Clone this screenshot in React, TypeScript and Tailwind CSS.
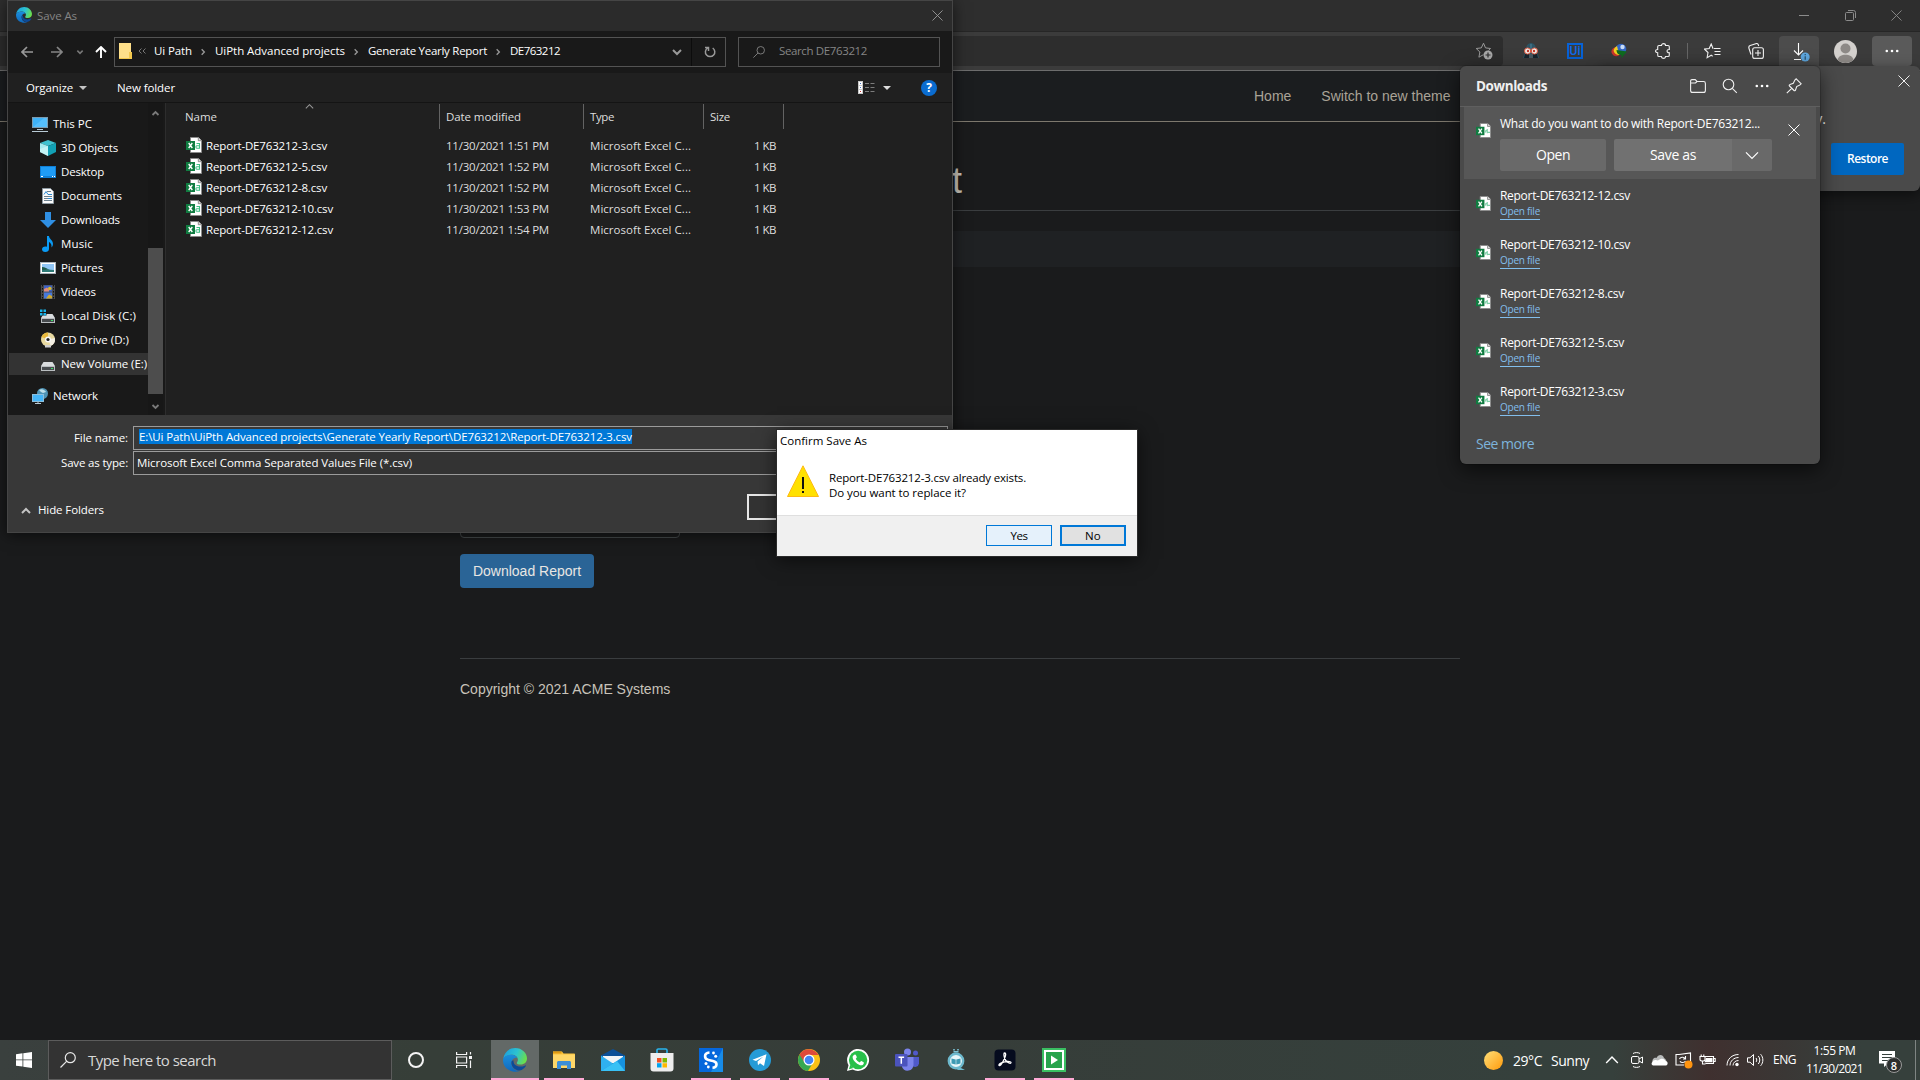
import React, { useLayoutEffect, useRef, useState } from 'react';

/* Single-line label that tightens its tracking to fill exactly `w` pixels. */
function T({ w, className = '', children }: { w: number; className?: string; children: string }) {
  const ref = useRef<HTMLSpanElement>(null);
  const [ls, setLs] = useState(0);
  useLayoutEffect(() => {
    if (!ref.current) return;
    const natural = ref.current.getBoundingClientRect().width - ls * children.length;
    setLs((w - natural) / children.length);
  }, [w, children]);
  return (
    <span className={`block shrink-0 whitespace-nowrap ${className}`} style={{ width: w }}>
      <span ref={ref} className="inline-block whitespace-pre" style={{ letterSpacing: `${ls}px` }}>
        {children}
      </span>
    </span>
  );
}

type P = { className?: string };

const Edge = ({ className = '', id }: P & { id: string }) => (
  <svg viewBox="0 0 24 24" className={`shrink-0 ${className}`}>
    <defs>
      <linearGradient id={`${id}a`} x1="0" y1="0.2" x2="1" y2="0.5">
        <stop offset="0" stopColor="#1c9fe0" />
        <stop offset="0.55" stopColor="#2cc3d0" />
        <stop offset="1" stopColor="#6ade4c" />
      </linearGradient>
      <linearGradient id={`${id}b`} x1="0" y1="0" x2="0" y2="1">
        <stop offset="0" stopColor="#1b8fdc" />
        <stop offset="1" stopColor="#1068bd" />
      </linearGradient>
    </defs>
    <path d="M0.3 10.5C1.2 4.2 6.2 0 12.2 0 19 0 24 5 24 10.6c0 3.7-2.8 6-6.2 6-2.7 0-4-.8-4-1.7 0-.8 1.1-1.2 1.1-3.2C14.900 8.900 12 6.800 8.600 6.800 4.900 6.800 1.500 8.600.3 10.500z" fill={`url(#${id}a)`} />
    <path d="M.2 10.500C1.700 8.200 4.800 6.800 8.300 6.800c3 0 5.200 1.400 6.100 3.200-2.700-.8-6 1.400-6 5.300 0 4.700 4.300 8 8.500 7.700C11 25.500 0 22 0 12z" fill={`url(#${id}b)`} />
    <path d="M8.500 13.500c-.8 5 3.500 9 8.200 9.100 2.800-.7 4.900-2.500 6.200-4.600.3-.5-.1-.8-.6-.6-6.600 2.900-12.400.2-11.800-5.100-.9.3-1.600.6-2 1.200z" fill="#0c4a98" />
  </svg>
);

const Excel = ({ className = '', letter = true }: P & { letter?: boolean }) => (
  <svg viewBox="0 0 16 16" className={`shrink-0 ${className}`}>
    <path d="M4.500.5h8L15.500 3.500v12H4.500z" fill="#fff" stroke="#8b8b8b" />
    <path d="M12.300.5v3.200h3.200" fill="#ddd" stroke="#777" strokeWidth=".8" />
    <rect x="0" y="4" width="9" height="9" fill="#107c41" />
    <path d="M2.700 6l3.600 5M6.300 6l-3.600 5" stroke="#fff" strokeWidth="1.400" />
    {letter ? (
      <path d="M10.500 6.500h3v4.700h-2.800c-1 0-1-2.500 0-2.500h2.800" fill="none" stroke="#3fbf85" strokeWidth="1.100" />
    ) : (
      <path d="M9.500 10.500c1-4 2-3 2.500-.5h3M12 6.500v4.500" fill="none" stroke="#7fd0a8" strokeWidth="1.200" />
    )}
  </svg>
);

const Chevron = ({ className = '', d = 'M2 4l4 4 4-4', sw = 1.5 }: P & { d?: string; sw?: number }) => (
  <svg viewBox="0 0 12 12" className={`shrink-0 ${className}`} fill="none" stroke="currentColor" strokeWidth={sw}>
    <path d={d} />
  </svg>
);
const RIGHT = 'M4 2l4 4-4 4';
const UP = 'M2 8l4-4 4 4';

const Cross = ({ className = '' }: P) => (
  <svg viewBox="0 0 12 12" className={`shrink-0 ${className}`} fill="none" stroke="currentColor" strokeWidth="1">
    <path d="M.5.5l11 11M11.500.5l-11 11" />
  </svg>
);

const Dots = ({ className = '' }: P) => (
  <svg viewBox="0 0 14 4" className={`h-1 w-3.5 shrink-0 ${className}`} fill="#fff">
    <circle cx="1.800" cy="2" r="1.300" />
    <circle cx="7" cy="2" r="1.300" />
    <circle cx="12.200" cy="2" r="1.300" />
  </svg>
);

const Magnifier = ({ className = '' }: P) => (
  <svg viewBox="0 0 16 16" className={`shrink-0 ${className}`} fill="none" stroke="currentColor" strokeWidth="1.200">
    <circle cx="10.300" cy="5.700" r="5" />
    <path d="M6.800 9.200L.5 15.500" />
  </svg>
);

/* ---------- Navigation pane icons ---------- */
const S = ({ children }: { children: React.ReactNode }) => (
  <svg viewBox="0 0 16 16" className="size-4 shrink-0">{children}</svg>
);
const PcIcon = () => (
  <S>
    <rect x=".5" y="1.500" width="15" height="10" fill="#3fb2f7" stroke="#7b9bb0" />
    <path d="M1 11L12 2h3v9z" fill="#64c6ff" opacity=".6" />
    <path d="M5 13.500h6M0 15.500h16" stroke="#b9cbd6" />
  </S>
);
const CubeIcon = () => (
  <S>
    <path d="M8 0l8 3-8 3-8-3z" fill="#3fc1cf" />
    <path d="M0 3l8 3v10l-8-4z" fill="#a5ecf0" />
    <path d="M16 3L8 6v10l8-4z" fill="#12a0b4" />
    <path d="M0 9l8-3v10l-8-4z" fill="#d2f7f7" opacity=".7" />
  </S>
);
const DesktopIcon = () => (
  <S>
    <rect x="0" y="2" width="16" height="12" fill="#0f7fd6" />
    <rect x="1" y="3" width="14" height="9" fill="#1f9cf6" />
    <path d="M1 12.500h2M12 12.500h1M14 12.500h1" stroke="#fff" />
  </S>
);
const DocIcon = () => (
  <S>
    <path d="M2.500.5h8l3 3v12h-11z" fill="#fafafa" stroke="#8e9aa3" />
    <path d="M7 3.500h4M4 8.500h8M4 10.500h8M4 12.500h8" stroke="#6b7f8d" />
    <path d="M4 6.500l2-3 2 3h4M8 10.500h4" stroke="#2a8ad4" fill="none" />
  </S>
);
const DownIcon = () => (
  <S>
    <path d="M5 0h6v8h5l-8 8-8-8h5z" fill="#2f8fe3" />
  </S>
);
const MusicIcon = () => (
  <S>
    <path d="M7 0h2c0 3 4 4 4 8 0 2-1 3-1.500 3.500C12 8 10 6.500 9 6v7c0 2-1.500 3-3.700 3S2 14.800 2 13.300C2 11.500 4 10 7 10.800z" fill="#0a9bf5" />
  </S>
);
const PicIcon = () => (
  <S>
    <rect x=".5" y="2.500" width="15" height="11" fill="#fff" stroke="#a9b3ba" />
    <rect x="2" y="4" width="12" height="8" fill="#8fc5f5" />
    <path d="M2 8l5 1.500 7 .5v2H2z" fill="#2e7a76" />
    <path d="M2 7c3 0 5 2 8 2.500L2 10z" fill="#1d5a4c" />
  </S>
);
const VideoIcon = () => (
  <S>
    <rect x="1" y="1" width="14" height="14" fill="#4b4b4b" />
    <rect x="4" y="1.500" width="8" height="6" fill="#3a62c9" />
    <rect x="4" y="8.500" width="8" height="6" fill="#4678dc" />
    <path d="M4 7.500V5l3-1.500 2 2v2z" fill="#e28b7b" />
    <circle cx="9.800" cy="4.500" r="1.800" fill="#d8b92c" />
    <path d="M6 14.500l3-4 3 1.500v2.500z" fill="#cfa92c" />
    <path d="M2.500 1v14M13.500 1v14" stroke="#111" strokeDasharray="1.500 1.500" />
  </S>
);
const DriveIcon = ({ win = false }: { win?: boolean }) => (
  <S>
    <path d="M3.500 6h9L15 10H1z" fill="#d9dcde" />
    <rect x="1" y="10" width="14" height="5" fill="#b9bdc0" />
    <rect x="2" y="11" width="12" height="3" fill="#474b4e" />
    <rect x="11" y="12" width="2" height="1" fill="#3ee06a" />
    {win && (
      <>
        <rect x="0" y="1" width="6.500" height="6.500" fill="#191919" />
        <path d="M0 1.500h2.500V4H0zM3.500 1.500H6V4H3.500zM0 5h2.500v2.500H0zM3.500 5H6v2.500H3.500z" fill="#18b4ea" />
      </>
    )}
  </S>
);
const CdIcon = () => (
  <S>
    <circle cx="8" cy="7.500" r="7" fill="#e8d9a0" />
    <path d="M8 7.500L1.500 5A7 7 0 0 1 8 .5z" fill="#e9b93c" />
    <path d="M8 7.500l6.800-1.500a7 7 0 0 1-4 7.800z" fill="#f4f0e4" />
    <circle cx="8" cy="7.500" r="3" fill="#f7f7f7" />
    <circle cx="8" cy="7.500" r="1.600" fill="#222" />
    <path d="M5 13h6v2.500H5z" fill="#cfcfcf" />
  </S>
);
const NetIcon = () => (
  <S>
    <circle cx="10.500" cy="5.500" r="5.500" fill="#4f93b5" />
    <path d="M7 2c3-2 6 0 7 2l-3 1-2-1z" fill="#bfe0ea" />
    <rect x=".5" y="6.500" width="11" height="7" fill="#45b5f8" stroke="#8dbfdc" />
    <path d="M3 15.500h6M6 14v1.500" stroke="#b9cbd6" />
  </S>
);

const places: [string, number, React.ReactNode][] = [
  ['3D Objects', 57, <CubeIcon />],
  ['Desktop', 43, <DesktopIcon />],
  ['Documents', 61, <DocIcon />],
  ['Downloads', 59, <DownIcon />],
  ['Music', 32, <MusicIcon />],
  ['Pictures', 42, <PicIcon />],
  ['Videos', 35, <VideoIcon />],
  ['Local Disk (C:)', 75, <DriveIcon win />],
  ['CD Drive (D:)', 68, <CdIcon />],
  ['New Volume (E:)', 86, <DriveIcon />],
];

const files: [string, number, string][] = [
  ['Report-DE763212-3.csv', 121, '1:51'],
  ['Report-DE763212-5.csv', 121, '1:52'],
  ['Report-DE763212-8.csv', 121, '1:52'],
  ['Report-DE763212-10.csv', 127, '1:53'],
  ['Report-DE763212-12.csv', 127, '1:54'],
];

/* ---------- Save As window ---------- */
function SaveAs() {
  return (
    <div className="absolute top-0 left-[7px] flex h-[533px] w-[946px] flex-col border border-[#454545] bg-[#383838] font-['Open_Sans','Noto_Sans',sans-serif] text-[11.5px] leading-4 text-white shadow-[0_2px_14px_rgba(0,0,0,0.6)]">
      <div className="flex h-[30px] shrink-0 items-center bg-[#2b2b2b] pr-[9px] pl-2">
        <Edge id="e1" className="mb-0.5 size-4" />
        <T w={40} className="ml-[5px] text-[#858585]">Save As</T>
        <Cross className="mb-px ml-auto size-[11px] text-[#999]" />
      </div>

      <div className="flex h-[42px] shrink-0 items-center bg-[#191919] pl-[13px]">
        <svg viewBox="0 0 12 12" className="size-3 shrink-0 text-[#999]" fill="none" stroke="currentColor" strokeWidth="1.700"><path d="M12 6H1M6 1L1 6l5 5" /></svg>
        <svg viewBox="0 0 12 12" className="ml-[18px] size-3 shrink-0 text-[#858585]" fill="none" stroke="currentColor" strokeWidth="1.700"><path d="M0 6h11M6 1l5 5-5 5" /></svg>
        <Chevron className="ml-[13px] size-2 text-[#777]" sw={2.4} />
        <svg viewBox="0 0 12 12" className="ml-[11px] size-3 shrink-0" fill="none" stroke="#fff" strokeWidth="1.900"><path d="M6 12V1M1 6l5-5 5 5" /></svg>
        <div className="ml-[7px] flex h-[30px] w-[612px] shrink-0 items-center border border-[#535353] pl-1">
          <svg viewBox="0 0 13 16" className="mb-0.5 h-4 w-[13px] shrink-0">
            <rect width="12" height="16" fill="#ffe08a" />
            <path d="M10 9h3v7h-3z" fill="#f3c84d" />
            <path d="M0 15.500h11" stroke="#f3c84d" />
          </svg>
          <svg viewBox="0 0 8 6" className="mb-[3px] ml-[6px] h-1.5 w-2 shrink-0" fill="none" stroke="#777"><path d="M3.500.5L1 3l2.500 2.500M7.500.5L5 3l2.500 2.500" /></svg>
          <T w={38} className="mb-0.5 ml-[8px]">Ui Path</T>
          <Chevron className="ml-[7px] size-2 text-[#999]" d={RIGHT} sw={2} />
          <T w={130} className="mb-0.5 ml-[8px]">UiPth Advanced projects</T>
          <Chevron className="ml-[7px] size-2 text-[#999]" d={RIGHT} sw={2} />
          <T w={119} className="mb-0.5 ml-[8px]">Generate Yearly Report</T>
          <Chevron className="ml-[7px] size-2 text-[#999]" d={RIGHT} sw={2} />
          <T w={50} className="mb-0.5 ml-[8px]">DE763212</T>
          <Chevron className="ml-[111px] size-3 text-[#999]" sw={2} />
          <div className="ml-[8px] h-[28px] w-px bg-[#0c0c0c]" />
          <svg viewBox="0 0 12 12" className="ml-[12px] size-3 shrink-0" fill="none" stroke="#999" strokeWidth="1.500">
            <path d="M3.500 2A4.700 4.700 0 1 0 8.700 2M1 1.500h3.500V5" />
          </svg>
        </div>
        <div className="ml-3 flex h-[30px] w-[202px] items-center border border-[#535353] pl-[14px]">
          <Magnifier className="mb-px size-3 text-[#858585]" />
          <T w={88} className="mb-0.5 ml-[14px] text-[#858585]">Search DE763212</T>
        </div>
      </div>

      <div className="flex h-[30px] shrink-0 items-center border-b border-[#141414] bg-[#202020] pl-[18px]">
        <T w={47}>Organize</T>
        <svg viewBox="0 0 8 4" className="ml-[6px] h-1 w-2"><path d="M0 0h8L4 4z" fill="#c4c4c4" /></svg>
        <T w={58} className="ml-[30px]">New folder</T>
        <svg viewBox="0 0 17 13" className="ml-[683px] h-[13px] w-[17px] shrink-0">
          <path d="M0 0h5v13H0z" fill="#c9c9c9" />
          <path d="M1 1h3v3H1zM1 5h3v3H1zM1 9h3v3H1z" fill="#fff" />
          <path d="M2 2h1v1H2zM2 6h1v1H2z" fill="#3f6fbf" />
          <path d="M2 10h1v1H2z" fill="#c33" />
          <path d="M7 2.500h4M12.500 2.500h4M7 6.500h4M12.500 6.500h4M7 10.500h4M12.500 10.500h4" stroke="#7c7c7c" />
        </svg>
        <svg viewBox="0 0 8 4" className="ml-[8px] h-1 w-2"><path d="M0 0h8L4 4z" fill="#dcdcdc" /></svg>
        <div className="ml-[30px] flex size-4 items-center justify-center rounded-full bg-[#0a6cd0] text-[12px] font-bold">?</div>
      </div>

      <div className="flex h-[312px] shrink-0">
        <div className="flex w-[158px] shrink-0 border-r border-[#2d2d2d] bg-[#191919]">
          <div className="flex w-[140px] flex-col pt-[9px]">
            <div className="flex h-6 items-center pl-6">
              <PcIcon />
              <T w={39} className="ml-[5px]">This PC</T>
            </div>
            {places.map(([name, w, icon]) => (
              <div key={name} className={`my-px flex h-[22px] items-center overflow-hidden ${name.startsWith('New') ? 'ml-px bg-[#333] pl-[31px]' : 'pl-8'}`}>
                {icon}
                <T w={w} className="ml-[5px]">{name}</T>
              </div>
            ))}
            <div className="mt-2 flex h-6 items-center pl-6">
              <NetIcon />
              <T w={45} className="ml-[5px]">Network</T>
            </div>
          </div>
          <div className="flex w-[15px] flex-col items-center bg-[#171717] pt-[6px]">
            <Chevron className="size-[9px] text-[#7a7a7a]" d={UP} sw={2.400} />
            <div className="mt-[130px] h-[146px] w-[15px] shrink-0 bg-[#4d4d4d]" />
            <Chevron className="mt-[8px] size-[9px] text-[#7a7a7a]" sw={2.400} />
          </div>
        </div>
        <div className="flex-1 bg-[#202020] text-[#dedede]">
          <div className="flex h-[26px] pt-px">
            <div className="relative flex w-[274px] items-center border-r border-[#636363] pl-[19px]">
              <T w={32}>Name</T>
              <Chevron className="absolute top-[-3px] left-[138px] size-[11px] text-[#999]" d={UP} sw={1.100} />
            </div>
            <div className="flex w-[144px] items-center border-r border-[#636363] pl-[6px]"><T w={75}>Date modified</T></div>
            <div className="flex w-[120px] items-center border-r border-[#636363] pl-[6px]"><T w={24}>Type</T></div>
            <div className="flex w-[80px] items-center border-r border-[#636363] pl-[6px]"><T w={20}>Size</T></div>
          </div>
          <div className="mt-[6px] flex flex-col">
            {files.map(([name, w, time]) => (
              <div key={name} className="flex h-[21px] items-center pl-[20px]">
                <Excel className="mb-px size-4" />
                <T w={w} className="ml-1 text-white">{name}</T>
                <div className={w === 121 ? 'w-[119px]' : 'w-[113px]'} />
                <T w={103}>{`11/30/2021 ${time} PM`}</T>
                <T w={101} className="ml-[41px]">Microsoft Excel C...</T>
                <T w={22} className="ml-[63px]">1 KB</T>
              </div>
            ))}
          </div>
        </div>
      </div>

      <div className="flex flex-1 flex-col pt-[11px]">
        <div className="flex items-center">
          <div className="flex w-[125px] justify-end pr-[5px]"><T w={54}>File name:</T></div>
          <div className="flex h-[24px] w-[815px] items-center border border-[#9b9b9b] pl-[5px]">
            <T w={493} className="mb-[3px] bg-[#0078d7] leading-[15px]">{'E:\\Ui Path\\UiPth Advanced projects\\Generate Yearly Report\\DE763212\\Report-DE763212-3.csv'}</T>
          </div>
        </div>
        <div className="mt-px flex items-center">
          <div className="flex w-[125px] justify-end pr-[5px]"><T w={67}>Save as type:</T></div>
          <div className="flex h-[24px] w-[815px] items-center border border-[#9b9b9b] bg-[#333] pl-[3px]">
            <T w={275}>Microsoft Excel Comma Separated Values File (*.csv)</T>
          </div>
        </div>
        <div className="mt-[19px] flex items-start">
          <Chevron className="mt-[11px] ml-[12px] size-3 text-[#c4c4c4]" d={UP} sw={2} />
          <T w={66} className="mt-[8px] ml-[6px]">Hide Folders</T>
          <div className="ml-[643px] h-[26px] w-[86px] border-2 border-[#e6e6e6] bg-[#333]" />
        </div>
      </div>
    </div>
  );
}

function ConfirmDialog() {
  return (
    <div className="absolute top-[430px] left-[777px] flex h-[126px] w-[360px] flex-col bg-white font-['Open_Sans','Noto_Sans',sans-serif] text-[11.5px] text-black shadow-[0_0_0_1px_#2a2a2a,0_3px_18px_rgba(0,0,0,0.65)]">
      <div className="flex h-[85px] flex-col">
        <T w={87} className="mt-[3px] ml-[3px] leading-4">Confirm Save As</T>
        <div className="mt-[16px] flex pl-[10px]">
          <svg viewBox="0 0 32 32" className="size-8 shrink-0">
            <path d="M16 .8L31.500 31.500H.5z" fill="#ffe100" stroke="#fdb913" />
            <path d="M15 12h2v12h-2zM15 26h2v2h-2z" fill="#111" />
          </svg>
          <div className="mt-[5px] ml-[10px] leading-[15px]">
            <T w={197}>Report-DE763212-3.csv already exists.</T>
            <T w={137}>Do you want to replace it?</T>
          </div>
        </div>
      </div>
      <div className="flex h-[41px] justify-end gap-2 border-t border-[#dfdfdf] bg-[#f0f0f0] pt-[9px] pr-[11px]">
        <div className="flex h-[21px] w-[66px] items-center justify-center border border-[#0078d7] bg-[#e5f1fb]"><T w={17}>Yes</T></div>
        <div className="flex h-[21px] w-[66px] items-center justify-center border-2 border-[#0078d7] bg-[#e1e1e1]"><T w={16}>No</T></div>
      </div>
    </div>
  );
}

/* ---------- Browser ---------- */
const Cell = ({ children, className = '' }: { children: React.ReactNode; className?: string }) => (
  <div className={`flex w-11 shrink-0 items-center justify-center ${className}`}>{children}</div>
);

function Toolbar() {
  return (
    <>
      <div className="flex h-8 items-center justify-end border-b border-[#262626] bg-[#2e2e2e] pr-[18px]">
        <div className="h-px w-[10px] bg-[#8c8c8c]" />
        <svg viewBox="0 0 11 11" className="ml-[36px] size-[11px]" fill="none" stroke="#8c8c8c"><rect x=".5" y="2.500" width="8" height="8" rx="1" /><path d="M3 .5h5.500a2 2 0 0 1 2 2V8" /></svg>
        <Cross className="ml-[35px] size-[11px] text-[#8c8c8c]" />
      </div>
      <div className="flex h-[38px] items-center bg-[#3b3b3b]">
        <div className="flex h-[30px] flex-1 items-center justify-end rounded-r bg-[#2d2d2d] pr-[10px]">
          <svg viewBox="0 0 18 18" className="size-[18px]" fill="none" stroke="#9a9a9a">
            <path d="M8.500 1.200l2 4.700 5 .6-2 1.900M8.500 1.200L6.300 5.900l-5.100.6 3.700 3.500-1 5.200 4.500-2.500" />
            <circle cx="13" cy="13" r="4.500" fill="#a8a8a8" stroke="none" />
            <path d="M13 10.500v5M10.500 13h5" stroke="#2d2d2d" strokeWidth="1.200" />
          </svg>
        </div>
        <div className="w-[6px]" />
        <Cell>
          <svg viewBox="0 0 16 16" className="size-4">
            <path d="M3 6c0-4 3-6 5-6s5 2 5 6l3 9H0z" fill="#2c5566" />
            <path d="M2 11h12l1 4H1z" fill="#16242c" />
            <path d="M8 1v5" stroke="#4c8298" />
            <circle cx="4.600" cy="8" r="3.100" fill="#f2ede8" stroke="#d7553e" />
            <circle cx="11.400" cy="8" r="3.100" fill="#f2ede8" stroke="#d7553e" />
            <circle cx="5" cy="8" r="1.200" fill="#c0392b" />
            <circle cx="11" cy="8" r="1.200" fill="#c0392b" />
            <path d="M7 11v4M9 11v4" stroke="#7b8a92" />
          </svg>
        </Cell>
        <Cell>
          <div className="flex size-4 items-center justify-center border-2 border-[#0662d8] font-['Roboto',sans-serif] text-[12px] leading-none font-medium text-[#0a6cf0]">Ui</div>
        </Cell>
        <Cell>
          <svg viewBox="0 0 16 16" className="size-4">
            <circle cx="10" cy="6" r="5.300" fill="#3466c4" />
            <circle cx="11.500" cy="4" r="2.200" fill="#c9dcf5" />
            <path d="M5 4C2 4.500 0 7 .5 9.500 1.500 13 5 14 8 12.500L4.500 9z" fill="#c9362a" />
            <path d="M6 3C3 5 2 7 3 9c1 2.500 4 3 6 3L7 7z" fill="#f0d020" />
            <path d="M5.500 7l10.500 1.500-5.500 6.500v-3c-3 0-5-2-5-5z" fill="#0f6a20" />
          </svg>
        </Cell>
        <Cell>
          <svg viewBox="0 0 16 16" className="size-4" fill="none" stroke="#f2f2f2" strokeWidth="1.100">
            <path d="M4 2.500h2.500c0-2.500 4-2.500 4 0H13c.8 0 1.300.5 1.300 1.300v2.700c-3-.3-3 3.500 0 3.200v2.500c0 .8-.5 1.300-1.300 1.300h-2.500c0 2.500-4 2.500-4 0H4c-.8 0-1.300-.5-1.300-1.300V9.700C-.2 9.700-.2 6.500 2.700 6.500V3.800c0-.8.500-1.300 1.300-1.300z" />
          </svg>
        </Cell>
        <div className="mx-[2px] h-4 w-px bg-[#666]" />
        <Cell>
          <svg viewBox="0 0 17 16" className="h-4 w-[17px]" fill="none" stroke="#f2f2f2" strokeWidth="1.100">
            <path d="M9.500 5.500H9L7.200 1 5.200 5.500l-4.700.6L4 9.500l-.9 5.200 4.100-2.500 1.500 1M10 5.500h6.500M10.500 8.500h6M10.500 11.500h6" />
          </svg>
        </Cell>
        <Cell>
          <svg viewBox="0 0 16 16" className="size-4" fill="none" stroke="#f2f2f2" strokeWidth="1.100">
            <rect x="4.700" y="4.700" width="10.700" height="10.700" rx="2" />
            <path d="M10 7v6M7 10h6M3 11.500L1 5.500C.6 4.300 1 3 2.200 2.600l5.500-1.900c1.200-.4 2.300.2 2.700 1.300l.3 1" />
          </svg>
        </Cell>
        <div className="ml-[1px] flex h-[30px] w-10 items-center justify-center rounded-t bg-[#4c4c4c]">
          <svg viewBox="0 0 18 20" className="mt-0.5 ml-1 h-5 w-[18px]" fill="none" stroke="#fff" strokeWidth="1.100">
            <path d="M6.500 1v12M2 8.500l4.500 4.500L11 8.500M2 17.500h7" />
            <circle cx="13.200" cy="15" r="4.500" fill="#5fa8e0" stroke="none" />
            <path d="M13.200 12v1.200M13.200 14.200v3.500" stroke="#23475f" />
          </svg>
        </div>
        <div className="ml-[15px] flex size-[23px] items-center justify-center overflow-hidden rounded-full bg-[#d3d0cd]">
          <svg viewBox="0 0 23 23" className="size-[23px]" fill="#8d8986"><circle cx="11.500" cy="8.500" r="5" /><path d="M3.500 20c1-7 15-7 16 0-4 4-12 4-16 0z" /></svg>
        </div>
        <div className="mr-2 ml-[15px] flex h-[30px] w-10 items-center justify-center rounded bg-[#5a5a5a]"><Dots /></div>
      </div>
    </>
  );
}

function AcmePage() {
  return (
    <div className="flex flex-1 flex-col border-t border-[#6d6d6d] bg-[#1a1b1c] font-['Liberation_Sans',sans-serif] text-[14px] text-[#c8c3ba]">
      <div className="flex h-[51px] border-b border-[#7d786d] bg-[#1b1d1f] pt-[15px] leading-5 text-[#aaa397]">
        <div className="ml-[1254px]">Home</div>
        <div className="ml-[30px] whitespace-nowrap">Switch to new theme</div>
      </div>
      <div className="mx-auto flex w-[1000px] flex-col">
        <div className="h-[89px] overflow-hidden border-b border-[#3a3d3f] pt-[39px] text-[36px] leading-[40px]"><div className="w-[502px] text-right">t</div></div>
        <div className="mt-5 h-9 bg-[#1f2123]" />
        <div className="mt-[232px] h-[39px] w-[220px] rounded border border-[#45494b]" />
        <div className="mt-4 flex h-[34px] w-[134px] items-center justify-center rounded bg-[#2a6496] text-[#e8e6e3]">Download Report</div>
        <div className="mt-[70px] border-t border-[#3a3d3f] pt-5 leading-5">Copyright © 2021 ACME Systems</div>
      </div>
    </div>
  );
}

function RestorePopup() {
  return (
    <div className="absolute top-[66px] left-[1600px] flex h-[125px] w-80 flex-col items-end rounded-r-md bg-[#4a4a4a] pt-[9px] pr-[10px] font-['Open_Sans','Noto_Sans',sans-serif] shadow-[0_4px_14px_rgba(0,0,0,0.5)]">
      <Cross className="size-3 text-[#f0f0f0]" />
      <div className="mt-[22px] mr-[84px] text-[14px] leading-5 text-white">y.</div>
      <div className="mt-[14px] mr-[6px] flex h-8 w-[73px] items-center justify-center rounded-xs bg-[#0067c0] text-[12px] font-semibold text-white"><T w={41}>Restore</T></div>
    </div>
  );
}

function Downloads() {
  const items: [string, number][] = [
    ['Report-DE763212-12.csv', 130],
    ['Report-DE763212-10.csv', 130],
    ['Report-DE763212-8.csv', 124],
    ['Report-DE763212-5.csv', 124],
    ['Report-DE763212-3.csv', 124],
  ];
  return (
    <div className="absolute top-[66px] left-[1460px] flex h-[398px] w-[360px] flex-col rounded-md bg-[#4a4a4a] font-['Open_Sans','Noto_Sans',sans-serif] text-[12px] text-white shadow-[0_0_0_1px_rgba(0,0,0,0.15),0_6px_20px_rgba(0,0,0,0.6)]">
      <div className="flex h-[41px] shrink-0 items-center border-b border-[#5f5f5f] pl-4 text-[#f0f0f0]">
        <T w={71} className="text-[13.5px] font-bold">Downloads</T>
        <svg viewBox="0 0 16 14" className="ml-[143px] h-3.5 w-4" fill="none" stroke="currentColor" strokeWidth="1.100"><path d="M.6 4V2C.6 1.200 1.200.6 2 .6h3.200L7 2.500h6.500c1 0 1.900.8 1.900 1.900v7c0 1.100-.9 2-1.900 2H2.500c-1 0-1.900-.9-1.900-2zM.6 4h4.900L7 2.500" /></svg>
        <svg viewBox="0 0 16 16" className="ml-[16px] size-4" fill="none" stroke="currentColor" strokeWidth="1.100"><circle cx="6.500" cy="6.500" r="5.300" /><path d="M10.300 10.300l4.500 4.500" /></svg>
        <Dots className="ml-[17px]" />
        <svg viewBox="0 0 16 16" className="mb-px ml-[17px] size-4" fill="none" stroke="currentColor" strokeWidth="1.100"><path d="M10.200.8l5 5c-.8 1.300-1.800 1.700-4.500 2.800L9.500 12c-.3.9-1 1-1.500.5L3.500 8C3 7.500 3.100 6.800 4 6.500l3.300-1.300C8.500 2.500 9 1.500 10.200.8zM5.700 10.300L.8 15.200" /></svg>
      </div>
      <div className="mx-1 flex h-[72px] shrink-0 bg-[#575757] pl-3">
        <Excel className="mt-[16px] size-[15px]" letter={false} />
        <div className="ml-[9px] w-[272px]">
          <T w={260} className="mt-[8px] leading-[18px]">What do you want to do with Report-DE763212...</T>
          <div className="mt-[6px] flex h-8 text-[14px]">
            <div className="flex w-[106px] items-center justify-center rounded-xs bg-[#696969] pb-px"><T w={34}>Open</T></div>
            <div className="ml-2 flex w-[118px] items-center justify-center rounded-l-xs bg-[#717171] pb-px"><T w={46}>Save as</T></div>
            <div className="flex w-10 items-center justify-center rounded-r-xs bg-[#696969] pb-px"><Chevron className="size-[16px]" d="M1.500 4l4.500 4.500 4.500-4.500" sw={0.900} /></div>
          </div>
        </div>
        <Cross className="mt-[17px] ml-[16px] size-3" />
      </div>
      <div className="flex flex-col pt-2">
        {items.map(([n, w]) => (
          <div key={n} className="flex h-[49px] pl-4">
            <Excel className="mt-[9px] size-[15px]" letter={false} />
            <div className="ml-[9px]">
              <T w={w} className="leading-[18px]">{n}</T>
              <T w={40} className="border-b border-[#83beec] pb-px text-[10px] leading-[13px] text-[#83beec]">Open file</T>
            </div>
          </div>
        ))}
      </div>
      <T w={58} className="mt-[2px] ml-4 text-[14px] leading-5 text-[#7db4dc]">See more</T>
    </div>
  );
}

/* ---------- Taskbar ---------- */
const TaskApp = ({ children, open = false, active = false }: { children: React.ReactNode; open?: boolean; active?: boolean }) => (
  <div className={`flex h-10 w-12 shrink-0 flex-col items-center ${active ? 'bg-[#636967]' : ''}`}>
    <div className="flex h-[38px] items-center pt-0.5">{children}</div>
    {open && <div className={`h-0.5 bg-[#ffaad6] ${active ? 'w-12' : 'w-10'}`} />}
  </div>
);

function Taskbar() {
  return (
    <div className="flex h-10 shrink-0 items-center bg-[linear-gradient(90deg,#3a403e_0%,#363e38_22%,#363d39_50%,#35403c_80%,#36403c_84%,#3f302f_89%,#3a3735_93%,#36403c_97%)] font-['Open_Sans','Noto_Sans',sans-serif] text-white">
      <svg viewBox="0 0 16 16" className="ml-4 size-4 shrink-0" fill="#fff"><path d="M0 2.200l6.500-.9v6.200H0zM7.300 1.200L16 0v7.500H7.300zM0 8.300h6.500v6.300L0 13.700zM7.300 8.300H16V16l-8.700-1.200z" /></svg>
      <div className="ml-4 flex h-10 w-[344px] shrink-0 items-center border border-[#5c5c5c] bg-[#333] pl-[11px] text-[#d8d8d8]">
        <Magnifier className="size-4 text-[#e8e8e8]" />
        <T w={128} className="ml-3 text-[15px]">Type here to search</T>
      </div>
      <div className="ml-4 size-4 shrink-0 rounded-full border-[2.5px] border-[#f4f4f4]" />
      <svg viewBox="0 0 17 16" className="mr-[18px] ml-[32px] h-4 w-[17px] shrink-0" fill="none" stroke="#f4f4f4" strokeWidth="1.200">
        <path d="M.6 0v2.500h10V0M.6 16v-2.500h10V16M.6 5h10v6H.6zM14.500 0v2.500M14.500 8.500V16" /><path d="M13 4h3v3h-3z" fill="#f4f4f4" stroke="none" />
      </svg>
      <TaskApp open active><Edge id="e2" className="size-6" /></TaskApp>
      <div className="ml-px flex shrink-0 gap-px">
        <TaskApp open>
          <svg viewBox="0 0 24 24" className="size-6"><path d="M1 3.500h9l1.500 2H22c.6 0 1 .4 1 1V20H1z" fill="#fcc43c" /><path d="M1 6.500h22V20H1z" fill="#ffd768" /><path d="M1 3.500h8.500v2H1z" fill="#e09a12" /><path d="M5 21v-6.500c0-.8.700-1.500 1.500-1.500h11c.8 0 1.500.7 1.500 1.500V21h-4v-3.500H9V21z" fill="#3d8fd8" /></svg>
        </TaskApp>
        <TaskApp>
          <svg viewBox="0 0 24 24" className="size-6"><path d="M0 7.500L12 1l12 6.500V12H0z" fill="#0c4f97" /><path d="M2 8h20v7H2z" fill="#f2f4f6" /><path d="M0 7.500l12 8V23H0z" fill="#2fb0f0" /><path d="M24 7.500l-12 8-12 7.500h24z" fill="#1692e0" /><path d="M0 23l16-10 8 10z" fill="#39c1f5" /></svg>
        </TaskApp>
        <TaskApp>
          <svg viewBox="0 0 24 24" className="size-6"><path d="M7 6V2.300C7 1.600 7.500 1 8.300 1h7.400c.8 0 1.300.6 1.300 1.300V6" fill="none" stroke="#29b5ee" strokeWidth="1.600" /><path d="M.5 5h23v15.500a3 3 0 0 1-3 3h-17a3 3 0 0 1-3-3z" fill="#ededed" /><path d="M7 10h4.500v4.500H7z" fill="#f25022" /><path d="M12.500 10H17v4.500h-4.500z" fill="#7fba00" /><path d="M7 15.200h4.500v4.300H7z" fill="#00a4ef" /><path d="M12.500 15.200H17v4.300h-4.500z" fill="#ffb900" /></svg>
        </TaskApp>
        <TaskApp open>
          <svg viewBox="0 0 24 24" className="size-6"><path d="M0 0h24v24H0z" fill="#0567dc" /><path d="M24 0v24H12z" fill="#178be8" /><path d="M10.500 4.500C4.500 5 5 11 9.500 12l4.500 1c5 1.200 4.500 6.500-.5 6.800" fill="none" stroke="#fff" strokeWidth="2.600" /><circle cx="14.500" cy="5" r="1.400" fill="#fff" /><circle cx="16.700" cy="8.300" r="1.500" fill="#fff" /><circle cx="7" cy="15.500" r="1.500" fill="#fff" /><circle cx="9.300" cy="19" r="1.400" fill="#fff" /></svg>
        </TaskApp>
        <TaskApp open>
          <svg viewBox="0 0 24 24" className="size-6"><circle cx="12" cy="12" r="11" fill="#259bd7" /><path d="M4.500 11.800L18.500 6.200 16 18l-4-2.800-2 2-.5-3.700 6-5-7.500 4.500z" fill="#fff" /></svg>
        </TaskApp>
        <TaskApp open>
          <svg viewBox="0 0 24 24" className="size-6"><circle cx="12" cy="12" r="11" fill="#fbc116" /><path d="M12 12L2.500 6.500A11 11 0 0 0 11 23l5-8.500z" fill="#36a852" /><path d="M2.500 6.500l5 8L12 7h9.500A11 11 0 0 0 2.500 6.500z" fill="#de4a3a" /><circle cx="12" cy="12" r="5.500" fill="#fff" /><circle cx="12" cy="12" r="4.300" fill="#4285f4" /></svg>
        </TaskApp>
        <TaskApp>
          <svg viewBox="0 0 24 24" className="size-6"><path d="M1 23l1.500-5.700A11 11 0 1 1 6.700 21.500z" fill="#fff" /><circle cx="12.100" cy="12" r="9.200" fill="#27c04a" /><path d="M3 21.200l1.200-4.500 3.200 3.300z" fill="#27c04a" /><path d="M8.500 6.700c.6-.3 1.200-.2 1.500.5l.8 1.900c.2.600-.5 1.100-1 1.700 1 1.800 2.200 2.800 4 3.600.6-.6 1-1.500 1.600-1.300l2.200 1.100c.8.400-.2 2.600-1.500 3-3 .8-9.600-4.200-9.500-8.300.1-.9 1-1.900 1.900-2.200z" fill="#fff" /></svg>
        </TaskApp>
        <TaskApp>
          <svg viewBox="0 0 24 24" className="size-6"><circle cx="12.500" cy="4" r="3.500" fill="#7b83eb" /><circle cx="20.500" cy="5" r="2.500" fill="#5059c9" /><path d="M16 9h8v6.500a4 4 0 0 1-7 2z" fill="#5059c9" /><path d="M7 9h11.500v8a6 6 0 0 1-11.500 2z" fill="#7b83eb" /><rect y="6" width="12.500" height="12.500" rx="1" fill="#4b53bc" /><path d="M3.500 9.200h5.600M6.300 9.200v6.500" stroke="#fff" strokeWidth="1.500" /></svg>
        </TaskApp>
        <TaskApp>
          <svg viewBox="0 0 24 24" className="size-6"><circle cx="12" cy="13" r="7.200" fill="#e8f6f9" stroke="#6db9cd" strokeWidth="2.400" /><path d="M15 19l6 3h-8z" fill="#6db9cd" /><path d="M9.500 3.800h5M10 1v1.500M14 1v1.500" stroke="#7cc4d6" strokeWidth="1.600" /><path d="M7.500 10.500l4.200 1v5l-4.200-1zM16.500 10.500l-4.200 1v5l4.200-1z" fill="#3d9ab3" /></svg>
        </TaskApp>
        <TaskApp open>
          <svg viewBox="0 0 24 24" className="size-6"><rect x="1.500" y="1.500" width="21" height="21" rx="4" fill="#050b1e" /><path d="M11.500 5c2.500 0 .5 5-1.500 8.500-1.500 2.700-3 4.500-3.800 4-1.200-.8 1.500-3 5.500-3.700 3.500-.6 6.500-.3 6.300.9-.3 1.500-3.500 0-5.200-2.200C11 10 10.400 5 11.500 5z" fill="none" stroke="#fff" strokeWidth="1.300" /></svg>
        </TaskApp>
        <TaskApp open>
          <svg viewBox="0 0 24 24" className="size-6"><path d="M0 0h24v24H0z" fill="#3abf62" /><rect x="3" y="3" width="18" height="18" fill="#27a34c" stroke="#fff" strokeWidth="2" /><path d="M9 7.500l7 4.500-7 4.500z" fill="#fff" /></svg>
        </TaskApp>
      </div>
      <div className="ml-auto flex h-10 items-center">
        <div className="size-[19px] rounded-full bg-[linear-gradient(135deg,#ffe07a,#ff9a0a)]" />
        <T w={29} className="ml-[10px] text-[14px]">29°C</T>
        <T w={38} className="ml-[9px] text-[14px]">Sunny</T>
        <Chevron className="ml-[16px] size-[14px]" d="M1 8.500l5-5 5 5" sw={1.200} />
        <svg viewBox="0 0 14 16" className="ml-[11px] h-4 w-3.5" fill="none" stroke="#fff"><rect x="1.500" y="4.500" width="7.500" height="7" rx="1.500" /><path d="M9 7l3.500-2v6L9 9M3 1.500c2-1.200 5-1.200 7 0M3 14.500c2 1.200 5 1.200 7 0" /></svg>
        <svg viewBox="0 0 17 12" className="ml-[7px] h-3 w-[17px]"><path d="M2 9C0 5 4 3 5.500 4 7 0 12 0 13 4c2 1 3 3 2 5z" fill="#b9bbbb" /><path d="M1 8.500C2 5.500 5 5.500 7 6.500c3-3 7-2 7.500.5 3 .5 2.500 4 .5 4.500H3C1 11.500 0 10 1 8.500z" fill="#fff" /></svg>
        <svg viewBox="0 0 18 17" className="ml-[7px] h-[17px] w-[18px]" fill="none" stroke="#fff" strokeWidth="1.100"><path d="M4 2.500L15.500 1v9M4 2.500H1v10.500h8" /><path d="M4.500 7c.5-2 4.500-2.500 5.500-.5M10.500 4v3H8M10.500 9c-1 2-4.500 2-5.500.3" /><circle cx="13.500" cy="12.500" r="4" fill="#ff9410" stroke="none" /></svg>
        <svg viewBox="0 0 17 14" className="ml-[6px] h-3.5 w-[17px]" fill="none" stroke="#fff" strokeWidth="1.100"><path d="M6.500 3.500h8v7h-8M15 5.500h1.200v3H15M1 3.500h5v3c0 2-5 2-5 0zM2.200 3.500v-2M4.800 3.500v-2M3.500 8v3h3" /><path d="M7 5h6.500v4.200H5.500z" fill="#fff" stroke="none" /></svg>
        <svg viewBox="0 0 14 14" className="ml-[10px] size-3.5" fill="none" stroke="#fff"><path d="M1 12.500C1 6 6 1.500 12.500 1.500M4 12.500c0-4.500 4-8 8.500-8M7 12.500c0-3 2.500-5 5.500-5" /><circle cx="11" cy="11.500" r="1.700" fill="#fff" stroke="none" /></svg>
        <svg viewBox="0 0 17 14" className="ml-[7px] h-3.5 w-[17px]" fill="none" stroke="#fff"><path d="M.5 4.800h2.500L6.500 1.500v11L3 9.200H.5zM9 5c1 1.200 1 3 0 4M11.300 3c2 2.300 2 5.700 0 8M13.600 1.200c3 3.300 3 8.300 0 11.600" /></svg>
        <T w={23} className="ml-[9px] text-[12px]">ENG</T>
        <div className="ml-[10px] flex w-[57px] flex-col items-center text-[12px] leading-[18px]">
          <T w={42}>1:55 PM</T>
          <T w={57}>11/30/2021</T>
        </div>
        <div className="relative ml-[16px] h-6 w-6">
          <svg viewBox="0 0 16 16" className="mt-[3px] size-4"><path d="M0 0h16v12.500H9L5 16v-3.500H0z" fill="#fff" /><path d="M3 3.500h10M3 6.500h10M3 9.500h6" stroke="#35403c" /></svg>
          <div className="absolute top-[9px] left-[7px] flex size-4 items-center justify-center rounded-full border border-[#9a9a9a] bg-[#2c2f2e] text-[11px] leading-none font-semibold">8</div>
        </div>
        <div className="mr-[4px] ml-[12px] h-10 w-px bg-[#7f8583]" />
      </div>
    </div>
  );
}

export default function App() {
  return (
    <div className="relative flex h-[1080px] w-[1920px] flex-col overflow-hidden bg-[#1a1b1c]">
      <Toolbar />
      <AcmePage />
      <Taskbar />
      <RestorePopup />
      <Downloads />
      <SaveAs />
      <ConfirmDialog />
    </div>
  );
}
